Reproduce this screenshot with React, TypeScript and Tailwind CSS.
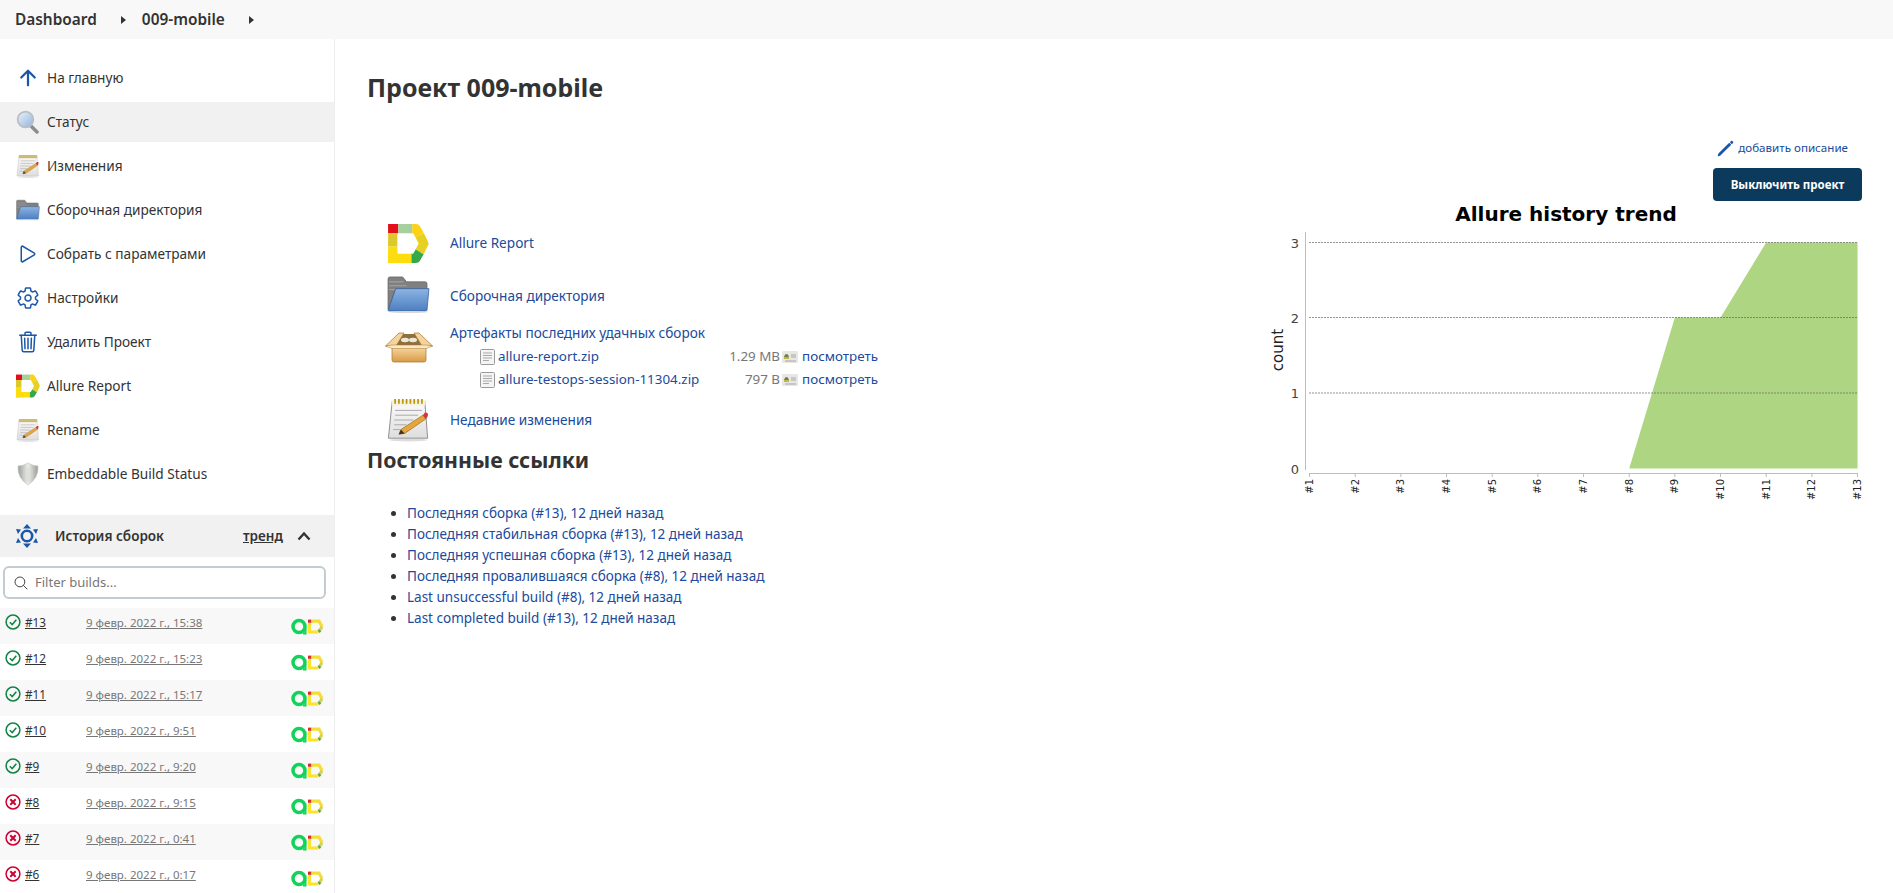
import React from "react";
import {
  IoArrowUpOutline,
  IoPencil,
  IoPlayOutline,
  IoSearchOutline,
  IoSettingsOutline,
  IoTrashOutline,
} from "react-icons/io5";

const AllureLogo: React.FC<{ className?: string }> = ({ className }) => (
  <svg viewBox="0 0 44 42" className={className}>
    <g fill="none" strokeWidth="10" strokeLinejoin="round">
      <path d="M0 5H11" stroke="#e30f1b" />
      <path d="M11 5H26" stroke="#a8cfa0" />
      <path d="M26 5H30L34 12" stroke="#fcd314" />
      <path d="M34 12L38.500 21L34 30" stroke="#e8d023" />
      <path d="M34 30L30 37H25" stroke="#35a84a" />
      <path d="M25 37H0" stroke="#fddc10" />
      <path d="M5 42V24" stroke="#fddc10" />
      <path d="M5 24V10" stroke="#dcc92c" />
    </g>
  </svg>
);

const Magnifier: React.FC<{ className?: string }> = ({ className }) => (
  <svg viewBox="0 0 24 24" className={className}>
    <defs>
      <linearGradient id="lens" x1="0" y1="0" x2="1" y2="1">
        <stop offset="0" stopColor="#eef3fa" />
        <stop offset="1" stopColor="#8fb2de" />
      </linearGradient>
    </defs>
    <path d="M14 15L21 22" stroke="#8d8d8d" strokeWidth="3.500" strokeLinecap="round" />
    <circle cx="9.500" cy="9.500" r="7.800" fill="url(#lens)" stroke="#b7bfc6" strokeWidth="1.800" />
  </svg>
);

const Notepad: React.FC<{ className?: string; rings?: boolean }> = ({ className, rings }) => (
  <svg viewBox="0 0 44 46" className={className}>
    <defs>
      <linearGradient id="pad" x1="0" y1="0" x2="0" y2="1">
        <stop offset="0" stopColor="#fbfbfb" />
        <stop offset="1" stopColor="#dedede" />
      </linearGradient>
    </defs>
    <ellipse cx="22" cy="44" rx="20" ry="1.500" fill="#dddddd" />
    <path d="M5 3H39L42 42H1Z" fill="url(#pad)" stroke={rings ? "#8a8a8a" : "#c4c4c4"} />
    <rect x="4.500" y="2" width="35" height="6" fill={rings ? "#f5f2df" : "#cdbb73"} />
    {rings && (
      <path d="M8 1V6M12 1V6M16 1V6M20 1V6M24 1V6M28 1V6M32 1V6M36 1V6" stroke="#b8960f" strokeWidth="1.800" />
    )}
    <path d="M8 13H36M8 18H32M7 23H27M7 28H20M6 33H13" stroke="#a8a8a8" strokeWidth="1" />
    <path d="M14 33L37 18L40 22L18 37L12 38Z" fill="#e4a73d" stroke="#9a6a1c" strokeWidth="0.700" />
    <path d="M37 18L39 15.500Q41.500 14.500 42.500 17Q42.500 19.500 40 22Z" fill="#d8323c" />
    <path d="M14 33L12 38L18 37Z" fill="#3c3226" />
  </svg>
);

const Folder: React.FC<{ className?: string }> = ({ className }) => (
  <svg viewBox="0 0 44 38" className={className}>
    <defs>
      <linearGradient id="fold" x1="0" y1="0" x2="0" y2="1">
        <stop offset="0" stopColor="#8db4e2" />
        <stop offset="1" stopColor="#4c7fc0" />
      </linearGradient>
    </defs>
    <path d="M1 3Q1 1 3 1H16L20 6H39Q41 6 41 8V14H8L3 34H1Z" fill="#808080" stroke="#666" strokeWidth="0.800" />
    <path d="M2 10H20M2 14H8M2 6H17" stroke="#a8a8a8" strokeWidth="1" />
    <path d="M9 13H43L41 35Q41 36 39 36H2Q1 36 1 35Z" fill="url(#fold)" stroke="#35609c" strokeWidth="0.800" />
    <ellipse cx="22" cy="37" rx="20" ry="1" fill="#d8d8d8" />
  </svg>
);

const Box: React.FC<{ className?: string }> = ({ className }) => (
  <svg viewBox="0 0 48 31" className={className}>
    <defs>
      <linearGradient id="box" x1="0" y1="0" x2="0" y2="1">
        <stop offset="0" stopColor="#f6d8a2" />
        <stop offset="1" stopColor="#d99b45" />
      </linearGradient>
    </defs>
    <path d="M11 14L15 2H33L37 14Z" fill="#8f6f3c" />
    <ellipse cx="20" cy="8" rx="4" ry="2.200" fill="#ece8dc" />
    <ellipse cx="28" cy="8" rx="4" ry="2.200" fill="#ece8dc" />
    <path d="M0.500 14L14 1H19L11 14Z" fill="#f4d49c" stroke="#a8742a" strokeWidth="0.700" />
    <path d="M47.500 14L34 1H29L37 14Z" fill="#f4d49c" stroke="#a8742a" strokeWidth="0.700" />
    <path d="M7 15H41V28Q41 30 39 30H9Q7 30 7 28Z" fill="url(#box)" stroke="#a8742a" strokeWidth="0.700" />
    <path d="M0.500 14L7 16.500H41L47.500 14L41 13H7Z" fill="#fbe8c8" stroke="#a8742a" strokeWidth="0.500" />
  </svg>
);

const Shield: React.FC<{ className?: string }> = ({ className }) => (
  <svg viewBox="0 0 24 24" className={className}>
    <defs>
      <linearGradient id="shield" x1="0" y1="0" x2="1" y2="0">
        <stop offset="0" stopColor="#9a9e97" />
        <stop offset="0.500" stopColor="#ebece8" />
        <stop offset="1" stopColor="#9a9e97" />
      </linearGradient>
    </defs>
    <path d="M12 1Q17 4 22 4Q23 16 12 23Q1 16 2 4Q7 4 12 1Z" fill="url(#shield)" stroke="#c4c7c1" strokeWidth="0.600" />
    <path d="M8 7V17M12 6V19M16 7V17" stroke="#cfd2cb" strokeWidth="0.800" />
  </svg>
);

const HistoryIcon: React.FC = () => (
  <svg viewBox="0 0 22 24" className="h-6 w-[22px] shrink-0">
    <circle cx="11" cy="12" r="5.200" fill="none" stroke="#1a57a8" strokeWidth="2.600" />
    <path d="M11 0L15 4.500H7ZM11 24L7 19.500H15ZM0 5L5 5.500L2 10ZM22 5L20 10L17 5.500ZM0 19L2 14L5 18.500ZM22 19L17 18.500L20 14Z" fill="#1a57a8" />
  </svg>
);

const Caret: React.FC = () => (
  <svg viewBox="0 0 5 8" className="h-2 w-[5px] shrink-0">
    <path d="M0 0L5 4L0 8Z" fill="#333" />
  </svg>
);

const Chevron: React.FC = () => (
  <svg viewBox="0 0 14 10" className="ml-[14px] h-[10px] w-[14px] shrink-0">
    <path d="M1.500 8.500L7 2.500L12.500 8.500" fill="none" stroke="#333" strokeWidth="2.400" />
  </svg>
);

const StatusIcon: React.FC<{ ok: boolean }> = ({ ok }) => (
  <svg viewBox="0 0 16 16" className="mb-2 h-4 w-4 shrink-0">
    <circle cx="8" cy="8" r="6.900" fill="none" stroke={ok ? "#138347" : "#cc0033"} strokeWidth="1.500" />
    {ok ? (
      <path d="M4.800 8.300L7.200 10.600L11.300 5.800" fill="none" stroke="#138347" strokeWidth="1.500" />
    ) : (
      <path d="M5.300 5.300L10.700 10.700M10.700 5.300L5.300 10.700" fill="none" stroke="#cc0033" strokeWidth="2" />
    )}
  </svg>
);

const BuildBadges: React.FC = () => (
  <svg viewBox="0 0 33 17" className="h-[17px] w-[33px] shrink-0">
    <circle cx="8" cy="8.500" r="6" fill="none" stroke="#12d35a" strokeWidth="3.500" />
    <path d="M14.500 10V15.500H12" fill="none" stroke="#12d35a" strokeWidth="2" />
    <g fill="none" strokeWidth="3.200">
      <path d="M17 3.200H20.500" stroke="#d92c2c" />
      <path d="M20.500 3.200H28L31 8.500" stroke="#f3de37" />
      <path d="M31 8.500L29 12" stroke="#e0d23a" />
      <path d="M29 12L27.500 14" stroke="#4aa84a" />
      <path d="M27.500 14H18.500V5" stroke="#fbe32d" />
    </g>
  </svg>
);

const DocIcon: React.FC = () => (
  <svg viewBox="0 0 15 16" className="h-4 w-[15px] shrink-0">
    <rect x="0.500" y="0.500" width="14" height="15" rx="1" fill="#f4f4f4" stroke="#9a9a9a" />
    <path d="M3 4H12M3 6.500H12M3 9H12M3 11.500H9" stroke="#a8a8a8" />
  </svg>
);

const ViewIcon: React.FC = () => (
  <svg viewBox="0 0 16 12" className="ml-[2px] mr-[4px] h-3 w-4 shrink-0">
    <rect x="0" y="0" width="16" height="12" rx="1" fill="#e6e8e4" />
    <path d="M2 6C3 2 6 2 7 6Z" fill="#7a7a4a" />
    <rect x="2" y="6" width="5" height="2" fill="#c4b24a" />
    <path d="M9 4H14M9 6H14M3 10H14" stroke="#a6a6a6" />
  </svg>
);

const navItems = [
  { label: "На главную", icon: <IoArrowUpOutline className="h-6 w-6 text-[#1a57a8]" /> },
  { label: "Статус", icon: <Magnifier className="h-6 w-6" />, active: true },
  { label: "Изменения", icon: <Notepad className="h-6 w-6" /> },
  { label: "Сборочная директория", icon: <Folder className="h-6 w-6" /> },
  { label: "Собрать с параметрами", icon: <IoPlayOutline className="h-6 w-6 text-[#1a57a8]" /> },
  { label: "Настройки", icon: <IoSettingsOutline className="h-6 w-6 text-[#1a57a8]" /> },
  { label: "Удалить Проект", icon: <IoTrashOutline className="h-6 w-6 text-[#1a57a8]" /> },
  { label: "Allure Report", icon: <AllureLogo className="h-6 w-6" /> },
  { label: "Rename", icon: <Notepad className="h-6 w-6" /> },
  { label: "Embeddable Build Status", icon: <Shield className="h-6 w-6" /> },
];

const builds = [
  { id: "#13", date: "9 февр. 2022 г., 15:38", ok: true },
  { id: "#12", date: "9 февр. 2022 г., 15:23", ok: true },
  { id: "#11", date: "9 февр. 2022 г., 15:17", ok: true },
  { id: "#10", date: "9 февр. 2022 г., 9:51", ok: true },
  { id: "#9", date: "9 февр. 2022 г., 9:20", ok: true },
  { id: "#8", date: "9 февр. 2022 г., 9:15", ok: false },
  { id: "#7", date: "9 февр. 2022 г., 0:41", ok: false },
  { id: "#6", date: "9 февр. 2022 г., 0:17", ok: false },
];

const artifacts = [
  { name: "allure-report.zip", size: "1.29 MB" },
  { name: "allure-testops-session-11304.zip", size: "797 B" },
];

const permalinks = [
  "Последняя сборка (#13), 12 дней назад",
  "Последняя стабильная сборка (#13), 12 дней назад",
  "Последняя успешная сборка (#13), 12 дней назад",
  "Последняя провалившаяся сборка (#8), 12 дней назад",
  "Last unsuccessful build (#8), 12 дней назад",
  "Last completed build (#13), 12 дней назад",
];

// chart coordinates are relative to the svg, top left at (1270, 201) on the page
const TrendChart: React.FC = () => {
  const xs = Array.from({ length: 13 }, (_, i) => 39.5 + i * 45.67);
  const ys = [267.5, 192, 116.5, 41.5];
  const area = [
    [xs[7], ys[0]],
    [xs[8], ys[2]],
    [xs[9], ys[2]],
    [xs[10], ys[3]],
    [xs[12], ys[3]],
    [xs[12], ys[0]],
  ]
    .map((p) => p.join(","))
    .join(" ");

  return (
    <svg width="592" height="320" className="shrink-0" style={{ fontFamily: "'DejaVu Sans', sans-serif" }}>
      <text x="296" y="20" textAnchor="middle" fontSize="20" fontWeight="700" fill="#000">
        Allure history trend
      </text>
      <polygon points={area} fill="#aed581" />
      {ys.slice(1).map((y) => (
        <line key={y} x1="39" x2="587" y1={y} y2={y} stroke="#666" strokeOpacity="0.7" strokeDasharray="2 1" />
      ))}
      <path d="M35.500 31V269" stroke="#bdbdbd" />
      <path d="M39 272.500H588" stroke="#bdbdbd" />
      {ys.map((y, i) => (
        <text key={y} x="29" y={y + 5} textAnchor="end" fontSize="13" fill="#444">
          {i}
        </text>
      ))}
      <text transform="translate(13,149) rotate(-90)" textAnchor="middle" fontSize="15" fill="#222">
        count
      </text>
      {xs.map((x, i) => (
        <g key={x}>
          <path d={`M${x} 272V276`} stroke="#bdbdbd" />
          <text transform={`translate(${x + 3.5},278) rotate(-90)`} textAnchor="end" fontSize="10" fill="#222">
            {`#${i + 1}`}
          </text>
        </g>
      ))}
    </svg>
  );
};

const App: React.FC = () => {
  return (
    <div className="flex h-screen flex-col overflow-hidden bg-white font-['Noto_Sans',sans-serif] text-[#333]">
      <div className="flex h-[39px] shrink-0 items-center bg-[#f8f8f8] pl-[15px] text-[15.4px] font-semibold">
        <span>Dashboard</span>
        <span className="ml-[24px] mr-[16px]">
          <Caret />
        </span>
        <span>009-mobile</span>
        <span className="ml-[24px]">
          <Caret />
        </span>
      </div>

      <div className="flex min-h-0 flex-1">
        <aside className="w-[335px] shrink-0 border-r border-[#eeeeee] pt-[19px]">
          <nav className="flex flex-col gap-1">
            {navItems.map((item) => (
              <div
                key={item.label}
                className={`flex h-10 items-center gap-[7px] pl-4 text-[13.65px] ${item.active ? "bg-[#f1f1f1]" : ""}`}
              >
                {item.icon}
                <span>{item.label}</span>
              </div>
            ))}
          </nav>

          <div className="mt-[21px] flex h-[42px] items-center bg-[#f1f1f1] pl-4 text-[13.5px] font-semibold">
            <HistoryIcon />
            <span className="ml-[17px] w-[188px]">История сборок</span>
            <span className="underline">тренд</span>
            <Chevron />
          </div>

          <div className="mx-[3px] mt-[9px] flex h-[33px] w-[323px] items-center rounded-md border-2 border-[#c3ccd1] pl-2 text-[13px] text-[#777]">
            <IoSearchOutline className="h-4 w-4 text-[#444]" />
            <span className="ml-[6px]">Filter builds...</span>
          </div>

          <div className="mt-[9px]">
            {builds.map((b, i) => (
              <div key={b.id} className={`flex h-9 items-center pl-[5px] ${i % 2 === 0 ? "bg-[#f8f8f8]" : ""}`}>
                <StatusIcon ok={b.ok} />
                <span className="mb-[6px] ml-[4px] w-[61px] text-[11.8px] underline">{b.id}</span>
                <span className="mb-[6px] w-[205px] text-[11.5px] text-[#777] underline">{b.date}</span>
                <BuildBadges />
              </div>
            ))}
          </div>
        </aside>

        <main className="flex min-w-0 flex-1 flex-col pl-8 pr-[31px]">
          <h1 className="mt-[31px] h-[34px] text-[25px] font-bold leading-[34px]">Проект 009-mobile</h1>

          <div className="mt-[32px] flex h-[24px] items-center justify-end gap-[3px] pr-[14px] text-[11.6px] text-[#204a9b]">
            <IoPencil className="h-[19px] w-[19px] text-[#1a57a8]" />
            <span>добавить описание</span>
          </div>
          <div className="mt-[8px] flex justify-end">
            <div className="flex h-[33px] w-[149px] items-center justify-center rounded bg-[#0b3a5c] text-[11.5px] font-bold text-white">
              Выключить проект
            </div>
          </div>

          <div className="flex items-start justify-between">
            <div>
              <div className="pt-[16px] text-[13.6px] text-[#204a9b]">
                <div className="flex h-[53px] items-center">
                  <div className="flex w-[83px] justify-center">
                    <AllureLogo className="h-[39px] w-[43px]" />
                  </div>
                  <span>Allure Report</span>
                </div>
                <div className="flex h-[52px] items-center">
                  <div className="mb-1 flex w-[83px] justify-center">
                    <Folder className="h-[37px] w-[43px]" />
                  </div>
                  <span>Сборочная директория</span>
                </div>
                <div className="flex h-[73px]">
                  <div className="flex w-[83px] justify-center pt-[10px]">
                    <Box className="h-[31px] w-[48px]" />
                  </div>
                  <div className="pt-[1px]">
                    <div className="h-[22px] leading-[20px]">Артефакты последних удачных сборок</div>
                    {artifacts.map((a) => (
                      <div key={a.name} className="flex h-[23px] w-[428px] items-center pl-[30px] text-[13.4px]">
                        <DocIcon />
                        <span className="ml-[3px]">{a.name}</span>
                        <span className="ml-auto text-[#777]">{a.size}</span>
                        <ViewIcon />
                        <span>посмотреть</span>
                      </div>
                    ))}
                  </div>
                </div>
                <div className="flex h-[50px] items-center">
                  <div className="flex w-[83px] justify-center">
                    <Notepad rings className="h-[44px] w-[43px]" />
                  </div>
                  <span>Недавние изменения</span>
                </div>
              </div>

              <h2 className="mt-[3px] text-[21.3px] font-bold leading-[24px]">Постоянные ссылки</h2>

              <ul className="mt-[31px] list-disc pl-[40px] text-[13.5px] leading-[21px] text-[#204a9b] marker:text-[#333]">
                {permalinks.map((link) => (
                  <li key={link}>{link}</li>
                ))}
              </ul>
            </div>
            <TrendChart />
          </div>
        </main>
      </div>
    </div>
  );
};

export default App;
